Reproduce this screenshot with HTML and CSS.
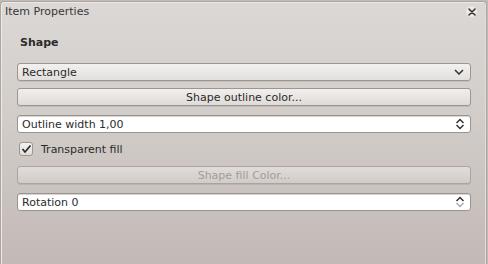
FILE: index.html
```html
<!DOCTYPE html>
<html>
<head>
<meta charset="utf-8">
<link rel="stylesheet" href="styles.css">
</head>
<body>
<div class="window">
  <div class="titlebar">
    <span class="title">Item Properties</span>
    <span class="close">
      <svg width="8" height="8" viewBox="0 0 8 8"><path d="M1 1 L7 7 M7 1 L1 7" stroke="#2e2e2e" stroke-width="1.5" stroke-linecap="round"/></svg>
    </span>
  </div>
  <div class="content">
    <div class="heading">Shape</div>
    <div class="combo">
      <span>Rectangle</span>
      <svg class="arrow" width="10" height="6" viewBox="0 0 10 6"><path d="M1 1 L5 5 L9 1" fill="none" stroke="#333" stroke-width="1.5"/></svg>
    </div>
    <div class="button outline">Shape outline color...</div>
    <div class="spin">
      <span>Outline width 1,00</span>
      <svg class="updown" width="10" height="12" viewBox="0 0 10 12"><path d="M1.5 5 L5 1.5 L8.5 5 M1.5 7 L5 10.5 L8.5 7" fill="none" stroke="#333" stroke-width="1.5"/></svg>
    </div>
    <label class="check">
      <span class="box"><svg width="11" height="10" viewBox="0 0 11 10"><path d="M1.5 5 L4 8 L9.5 1.5" fill="none" stroke="#2a2a2a" stroke-width="1.7"/></svg></span>
      <span>Transparent fill</span>
    </label>
    <div class="button disabled">Shape fill Color...</div>
    <div class="spin">
      <span>Rotation 0</span>
      <svg class="updown" width="10" height="12" viewBox="0 0 10 12"><path d="M1.5 5 L5 1.5 L8.5 5" fill="none" stroke="#333" stroke-width="1.5"/><path d="M1.5 7 L5 10.5 L8.5 7" fill="none" stroke="#aaa" stroke-width="1.5"/></svg>
    </div>
  </div>
</div>
</body>
</html>
```

FILE: styles.css
```css
html, body {
  margin: 0;
  padding: 0;
  background: #c4bab7;
}
body {
  font-family: "DejaVu Sans", sans-serif;
  font-size: 11px;
  color: #2b2b2b;
}
.window {
  box-sizing: border-box;
  width: 487px;
  height: 263px;
  margin-top: 1px;
  border: 1px solid #aca6a3;
  border-bottom: none;
  border-radius: 4px 4px 0 0;
  background: linear-gradient(#dbd8d5, #d3ceca 40%, #c3b9b6);
  box-shadow: inset 1px 1px 0 #ece9e7, inset -1px 0 0 #e2dedb;
}
.titlebar {
  height: 19px;
  display: flex;
  align-items: center;
  justify-content: space-between;
  padding: 0 9px 0 4px;
}
.title {
  font-size: 11px;
  color: #383838;
}
.close {
  width: 11px;
  height: 11px;
  border-radius: 50%;
  background: #ece9e7;
  display: flex;
  align-items: center;
  justify-content: center;
}
.content {
  padding: 12px 15px 0 16px;
  display: flex;
  flex-direction: column;
}
.heading {
  font-weight: bold;
  padding-left: 3px;
  height: 20px;
  line-height: 20px;
  margin-bottom: 10px;
}
.combo, .button, .spin {
  box-sizing: border-box;
  height: 18px;
  border-radius: 3px;
  display: flex;
  align-items: center;
}
.combo {
  border: 1px solid #9c9693;
  background: linear-gradient(#f3f1f0, #e2dfdc);
  padding: 0 6px 0 4px;
  justify-content: space-between;
  box-shadow: 0 1px 0 rgba(0,0,0,0.08);
  margin-bottom: 7px;
}
.button {
  border: 1px solid #9c9693;
  background: linear-gradient(#f1efed, #dfdbd8);
  justify-content: center;
  box-shadow: 0 1px 0 rgba(0,0,0,0.08);
}
.button.outline {
  margin-bottom: 9px;
}
.button.disabled {
  color: #a29c99;
  border-color: #aaa4a1;
  background: linear-gradient(#e0dcd9, #d2ccc9);
  margin-bottom: 9px;
}
.spin {
  border: 1px solid #9a9491;
  background: #fff;
  padding: 0 5px 0 4px;
  justify-content: space-between;
  box-shadow: inset 0 1px 0 #d8d4d1;
}
.check {
  display: flex;
  align-items: center;
  height: 18px;
  margin: 7px 0 8px 2px;
  gap: 8px;
}
.box {
  box-sizing: border-box;
  width: 14px;
  height: 14px;
  border: 1px solid #9c9693;
  border-radius: 3px;
  background: linear-gradient(#f4f2f1, #e0dcd9);
  display: flex;
  align-items: center;
  justify-content: center;
}
```
